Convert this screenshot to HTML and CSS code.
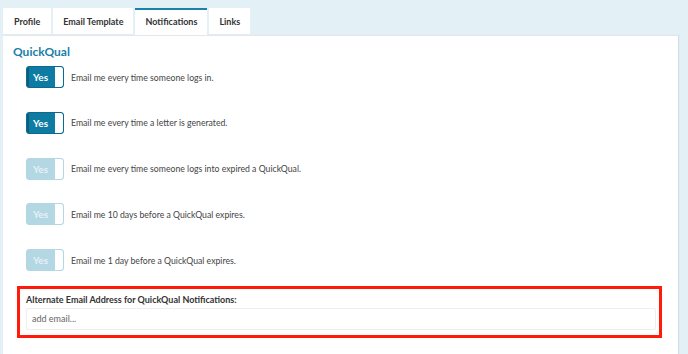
FILE: index.html
```html
<!DOCTYPE html>
<html lang="en">
<head>
  <meta charset="UTF-8">
  <title>Notifications</title>
  <link rel="stylesheet" href="styles.css">
</head>
<body>
  <div class="page">
    <nav class="tabs">
      <div class="tab">Profile</div>
      <div class="tab">Email Template</div>
      <div class="tab active">Notifications</div>
      <div class="tab">Links</div>
    </nav>

    <div class="panel">
      <h2 class="section-title">QuickQual</h2>

      <div class="option">
        <div class="toggle on"><span class="label">Yes</span><span class="knob"></span></div>
        <span class="option-text">Email me every time someone logs in.</span>
      </div>
      <div class="option">
        <div class="toggle on"><span class="label">Yes</span><span class="knob"></span></div>
        <span class="option-text">Email me every time a letter is generated.</span>
      </div>
      <div class="option">
        <div class="toggle"><span class="label">Yes</span><span class="knob"></span></div>
        <span class="option-text">Email me every time someone logs into expired a QuickQual.</span>
      </div>
      <div class="option">
        <div class="toggle"><span class="label">Yes</span><span class="knob"></span></div>
        <span class="option-text">Email me 10 days before a QuickQual expires.</span>
      </div>
      <div class="option">
        <div class="toggle"><span class="label">Yes</span><span class="knob"></span></div>
        <span class="option-text">Email me 1 day before a QuickQual expires.</span>
      </div>

      <div class="alt-email">
        <label class="alt-label">Alternate Email Address for QuickQual Notifications:</label>
        <input class="alt-input" type="text" placeholder="add email...">
      </div>

      <div class="next-block"></div>
    </div>
  </div>
</body>
</html>
```

FILE: styles.css
```css
* {
  margin: 0;
  padding: 0;
  box-sizing: border-box;
  font-family: Lato, "Open Sans", Arial, sans-serif;
}

body {
  background-color: #e3f1f6;
  color: #444;
  overflow: hidden;
}

.page {
  padding: 8px 10px 0 3px;
}

/* Tabs */
.tabs {
  display: flex;
  gap: 2px;
  height: 27px;
}

.tab {
  background-color: #fff;
  color: #333;
  font-size: 9px;
  font-weight: bold;
  padding: 0 10px;
  height: 26px;
  line-height: 27px;
}

.tab:first-child {
  padding: 0 11px;
}

.tab.active {
  border-top: 2px solid #1a82a9;
  line-height: 23px;
  height: 27px;
  margin-bottom: -1px;
}

/* Panel */
.panel {
  background-color: #fff;
  border-top: 1px solid #e4e8ea;
  box-shadow: 1px 0 1px rgba(0, 0, 0, 0.08);
  padding: 8px 10px 0 10px;
  height: 330px;
}

.section-title {
  color: #1a7fa8;
  font-size: 12px;
  font-weight: bold;
  margin-bottom: 7px;
}

.option {
  display: flex;
  align-items: center;
  height: 22px;
  margin-left: 13px;
  margin-bottom: 23.8px;
}

.toggle {
  display: flex;
  width: 38px;
  height: 22px;
  border-radius: 3px;
  overflow: hidden;
  background-color: #b4d7e4;
  border: 1px solid #b4d7e4;
  margin-right: 7px;
}

.toggle .label {
  flex: 1;
  color: #e6f2f6;
  font-size: 10px;
  font-weight: bold;
  line-height: 20px;
  padding-left: 6px;
}

.toggle .knob {
  width: 8px;
  background-color: #fff;
  border-radius: 0 2px 2px 0;
}

.toggle.on {
  background-color: #0e7ba2;
  border-color: #0b6a8e;
}

.toggle.on .label {
  color: #fff;
  border-left: 2px solid #0a5f80;
  padding-left: 4px;
}

.option-text {
  font-size: 8.7px;
}

/* Alternate email */
.alt-email {
  border: 3px solid #ff1a0a;
  margin: -9px 6px 0 4px;
  padding: 5px 3px 5px 6px;
}

.alt-label {
  display: block;
  color: #333;
  font-size: 9px;
  font-weight: bold;
  margin-bottom: 3px;
}

.alt-input {
  display: block;
  width: 100%;
  height: 22px;
  border: 1px solid #eeeeee;
  border-radius: 2px;
  padding: 0 5px;
  font-size: 9px;
  color: #444;
  outline: none;
}

.alt-input::placeholder {
  color: #666;
}

.next-block {
  margin-top: 16px;
  height: 6px;
  background-color: #f5f5f5;
  margin-left: 3px;
}
```
